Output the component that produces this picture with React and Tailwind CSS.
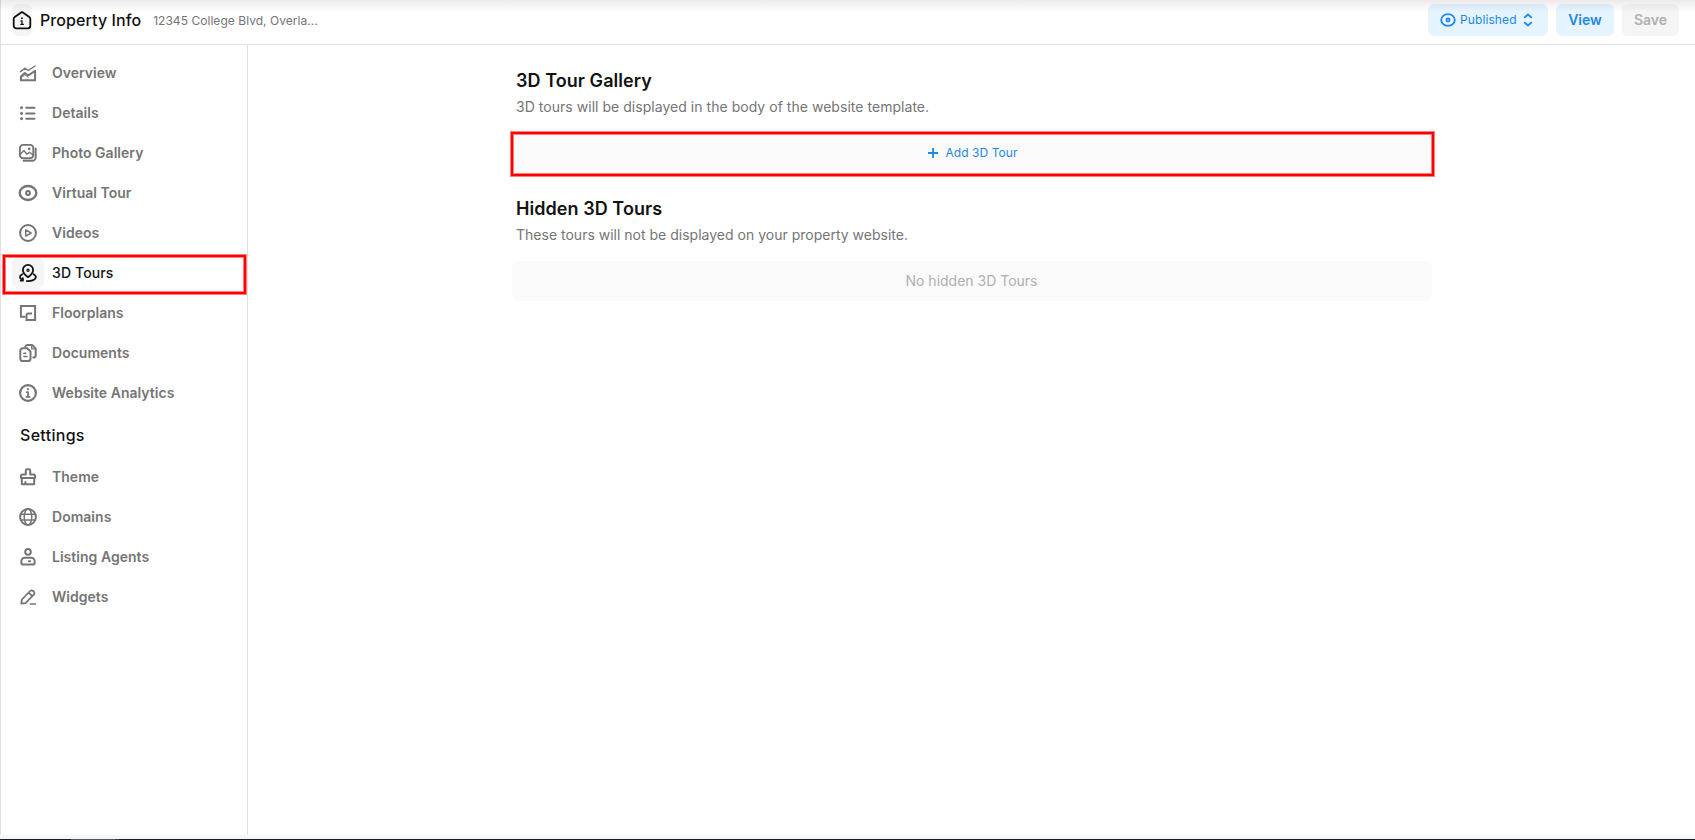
import React from "react";

function Icon({ children, size = 20, sw = 1.7 }) {
  return (
    <svg width={size} height={size} viewBox="0 0 20 20" fill="none" stroke="currentColor" strokeWidth={sw} strokeLinecap="round" strokeLinejoin="round" className="shrink-0">
      {children}
    </svg>
  );
}

const icons = {
  overview: (
    <Icon sw={2}>
      <path d="M2.600 8.600 6.800 5.200l3.400 2.300 6.900-4.500" strokeWidth="1.400" />
      <path d="M2.900 13.500 6.800 10l3.400 2.500 6.900-4.700v9.400H2.900z" />
      <path d="M3.300 14.900 6.900 11.700l3.300 2.400" strokeWidth="1" />
    </Icon>
  ),
  details: (
    <Icon sw={2}>
      <path d="M8.200 4.700H16.500M8.200 10.500H16.500M8.200 15.800H16.500" />
      <path d="M3.500 4.700h.1M3.500 10.500h.1M3.500 15.800h.1" strokeWidth="2.900" />
    </Icon>
  ),
  photos: (
    <Icon sw={1.900}>
      <rect x="1.900" y="1.900" width="13.400" height="13.400" rx="3.200" />
      <path d="M2.200 11.200 6 7.600l3 3.600 2.600-2 3.600 3" strokeWidth="1.400" />
      <circle cx="11.200" cy="5.800" r=".6" strokeWidth="1.500" />
      <path d="M17.700 5.400v8.800a3.600 3.600 0 0 1-3.600 3.600H5.600" />
    </Icon>
  ),
  virtual: (
    <Icon sw={2.300}>
      <ellipse cx="10" cy="10" rx="8.300" ry="7" />
      <circle cx="10" cy="10" r="1.900" strokeWidth="2" />
    </Icon>
  ),
  videos: (
    <Icon sw={2}>
      <circle cx="10" cy="10" r="7.900" />
      <path d="M7.700 6.900v6.200L13.200 10z" strokeWidth="1.500" />
    </Icon>
  ),
  tours: (
    <Icon sw={1.800}>
      <path d="M10 14.200C7 12.100 4.900 9.700 4.900 7a5.100 5.100 0 0 1 10.200 0c0 2.700-2.100 5.100-5.100 7.200z" />
      <circle cx="10" cy="7.200" r="1.100" strokeWidth="1.200" />
      <path d="M4.400 11.200C1.200 12.800 1 15 4.400 16.800M2.700 17.700h2.200v-2.500M15.600 11.200c4.600 2.500 1.800 6.900-5.600 6.900H8.800" />
    </Icon>
  ),
  floor: (
    <Icon sw={2}>
      <path d="M7.200 13.700H2.900V2.900H17.100V17.100H8.500V12.500a2 2 0 0 1 2-2H14" strokeLinecap="butt" strokeLinejoin="miter" />
    </Icon>
  ),
  docs: (
    <Icon sw={2}>
      <path d="M4.900 5.200h4.300l3.300 3.300v6.900a2.600 2.600 0 0 1-2.600 2.600h-5a2.600 2.600 0 0 1-2.600-2.600V7.800a2.600 2.600 0 0 1 2.600-2.600z" />
      <path d="M7.200 3.800a2.400 2.400 0 0 1 2.300-1.900h4.600l3.600 3.700v6.600a2.400 2.400 0 0 1-2.400 2.400" />
      <path d="M13.700 2.300v3.600h3.600M5.800 10.200h2M5.800 13.500h3.300" strokeWidth="1.400" />
    </Icon>
  ),
  info: (
    <Icon sw={2.200}>
      <circle cx="10" cy="10" r="7.900" />
      <path d="M10 6.100v.1" strokeWidth="2.200" />
      <path d="M8.800 9.200H10v4.600M8.400 13.900h3.200" strokeWidth="1.800" />
    </Icon>
  ),
  theme: (
    <Icon sw={2}>
      <path d="M2.900 11V9a1.600 1.600 0 0 1 1.600-1.600h3.300V3.600a1.300 1.300 0 0 1 1.300-1.300h1.800a1.300 1.300 0 0 1 1.300 1.300v3.800h3.300A1.600 1.600 0 0 1 17.100 9v2z" />
      <path d="M3.800 11.200v6h12.400v-6M7.300 15v2" />
    </Icon>
  ),
  globe: (
    <Icon sw={2}>
      <circle cx="10" cy="10" r="7.900" />
      <ellipse cx="10" cy="10" rx="3.800" ry="8" strokeWidth="1.500" />
      <path d="M2.800 7.200h14.400M2.800 13h14.400" strokeWidth="1.500" />
    </Icon>
  ),
  agent: (
    <Icon sw={2}>
      <circle cx="10" cy="4.900" r="2.800" />
      <path d="M6.700 10.700h6.600a3.300 3.300 0 0 1 3.300 3.300v1.800a1.800 1.800 0 0 1-1.800 1.800H5.200a1.800 1.800 0 0 1-1.800-1.800V14a3.300 3.300 0 0 1 3.300-3.300z" />
      <path d="M11 14.200h1.200" />
    </Icon>
  ),
  pencil: (
    <Icon sw={1.800}>
      <path d="M3.300 16.700l.6-4.200 8.200-8.500a2.100 2.100 0 0 1 3 0l.7.700a2.100 2.100 0 0 1 0 3l-8.300 8.400zM10.800 5.700l3.500 3.500" />
      <path d="M12.200 17h5.300" strokeWidth="1.300" />
    </Icon>
  ),
};

const nav = [
  ["Overview", "overview"],
  ["Details", "details"],
  ["Photo Gallery", "photos"],
  ["Virtual Tour", "virtual"],
  ["Videos", "videos"],
  ["3D Tours", "tours"],
  ["Floorplans", "floor"],
  ["Documents", "docs"],
  ["Website Analytics", "info"],
];

const settings = [
  ["Theme", "theme"],
  ["Domains", "globe"],
  ["Listing Agents", "agent"],
  ["Widgets", "pencil"],
];

function Highlight({ className }) {
  return (
    <div className={`pointer-events-none absolute border-2 border-[#ff0000] shadow-[0_0_0_1px_rgba(255,0,0,0.5),inset_0_0_0_1px_rgba(255,0,0,0.5)] ${className}`} />
  );
}

function NavItem({ label, icon, active }) {
  return (
    <a className={`relative flex h-10 items-center pl-[11px] text-sm ${active ? "font-medium tracking-[0.12px] text-[#121212]" : "font-semibold tracking-[0.02px] text-[#757575]"}`}>
      <span className={`mr-2 flex size-8 items-center justify-center rounded-lg ${active ? "bg-[#f5f5f5]" : ""}`}>{icons[icon]}</span>
      {label}
      {active && <Highlight className="top-[2px] left-[2px] h-[39px] w-[243px]" />}
    </a>
  );
}

export default function App() {
  return (
    <div className="relative flex h-[840px] w-[1695px] flex-col overflow-hidden bg-white font-['Inter',sans-serif] text-[#121212]">
      <div className="flex min-h-0 flex-1 flex-col border-l border-[#e0e0e0]">
        <header className="flex h-[45px] shrink-0 items-start border-b border-[#e0e0e0] pt-1 pr-4 pl-[11px]">
          <span className="flex h-8 w-5 items-center justify-center rounded-md bg-[#f5f5f5]">
            <Icon sw={1.800}>
              <path d="M1.700 9a2.500 2.500 0 0 1 1-2L8.400 2.900a2.600 2.600 0 0 1 3.200 0L17.300 7a2.500 2.500 0 0 1 1 2v6.700a2.600 2.600 0 0 1-2.600 2.600H4.300a2.600 2.600 0 0 1-2.600-2.600z" />
              <path d="M10 8.200v.1" strokeWidth="1.900" />
              <path d="M9 10.900h1v3.300M8.800 14.300h2.600" strokeWidth="1.300" />
            </Icon>
          </span>
          <h1 className="ml-2 text-base leading-8 font-medium tracking-[0.08px]">Property Info</h1>
          <span className="ml-3 text-xs leading-[33px] tracking-[0.04px] text-[#757575]">12345 College Blvd, Overla...</span>
          <div className="ml-auto flex gap-2">
            <button className="flex h-8 w-[120px] items-center rounded-md bg-[#e5f4ff] pl-3 text-xs tracking-[0.1px] text-[#1e88e5]">
              <Icon size={16} sw={2.200}>
                <ellipse cx="10" cy="10" rx="8.500" ry="7.200" />
                <circle cx="10" cy="10" r="2" />
              </Icon>
              <span className="ml-1">Published</span>
              <svg width="16" height="16" viewBox="0 0 16 16" fill="none" stroke="currentColor" strokeWidth="1.900" className="ml-[3.500px]">
                <path d="M4.200 5.900 8 2.500l3.800 3.400M4.200 10.100 8 13.500l3.800-3.400" />
              </svg>
            </button>
            <button className="h-8 w-[58px] rounded-md bg-[#e5f4ff] text-sm font-semibold text-[#1e88e5]">View</button>
            <button className="h-8 w-[57px] rounded-md bg-[#f5f5f5] text-sm font-semibold text-[#b0b0b0]">Save</button>
          </div>
        </header>
        <div className="flex min-h-0 flex-1">
          <nav className="w-[247px] shrink-0 border-r border-[#e0e0e0] pt-2">
            {nav.map(([label, icon]) => (
              <NavItem key={label} label={label} icon={icon} active={icon === "tours"} />
            ))}
            <h2 className="pl-[19px] text-base leading-[44px] font-medium tracking-[0.3px]">Settings</h2>
            {settings.map(([label, icon]) => (
              <NavItem key={label} label={label} icon={icon} />
            ))}
          </nav>
          <main className="flex flex-1 flex-col pt-6 pl-[264px]">
            <section className="w-[920px]">
              <h2 className="pl-1 text-lg leading-6 font-semibold tracking-[0.06px]">3D Tour Gallery</h2>
              <p className="mt-1 pl-1 text-sm leading-5 tracking-[0.035px] text-[#757575]">3D tours will be displayed in the body of the website template.</p>
              <div className="relative mt-4 flex h-10 items-center justify-center bg-[#fafafa] pl-px text-xs tracking-[0.06px] text-[#1e88e5] shadow-[0_3px_0_#fafafa]">
                <svg width="12" height="12" viewBox="0 0 12 12" stroke="currentColor" strokeWidth="1.800" className="mr-1.5">
                  <path d="M6 1v10M1 6h10" />
                </svg>
                Add 3D Tour
                <Highlight className="-top-px -left-px h-11 w-[923px]" />
              </div>
            </section>
            <section className="mt-6 w-[920px]">
              <h2 className="pl-1 text-lg leading-6 font-semibold tracking-[0.06px]">Hidden 3D Tours</h2>
              <p className="mt-1 pl-1 text-sm leading-5 tracking-[0.005px] text-[#757575]">These tours will not be displayed on your property website.</p>
              <div className="mt-4 flex h-10 items-center justify-center rounded-lg bg-[#fafafa] pr-px text-sm text-[#b0b0b0]">No hidden 3D Tours</div>
            </section>
          </main>
        </div>
      </div>
      <div className="h-1 shrink-0 bg-[#f5f6fb]" />
      <div className="flex h-px shrink-0 bg-[#1b1b22] pl-[71px]">
        <div className="w-11 bg-[#55565a]" />
        <div className="w-1 bg-[#3a3a3f]" />
      </div>
      <div className="pointer-events-none absolute inset-x-0 top-0 h-3 bg-linear-to-b from-black/8 to-transparent" />
    </div>
  );
}
